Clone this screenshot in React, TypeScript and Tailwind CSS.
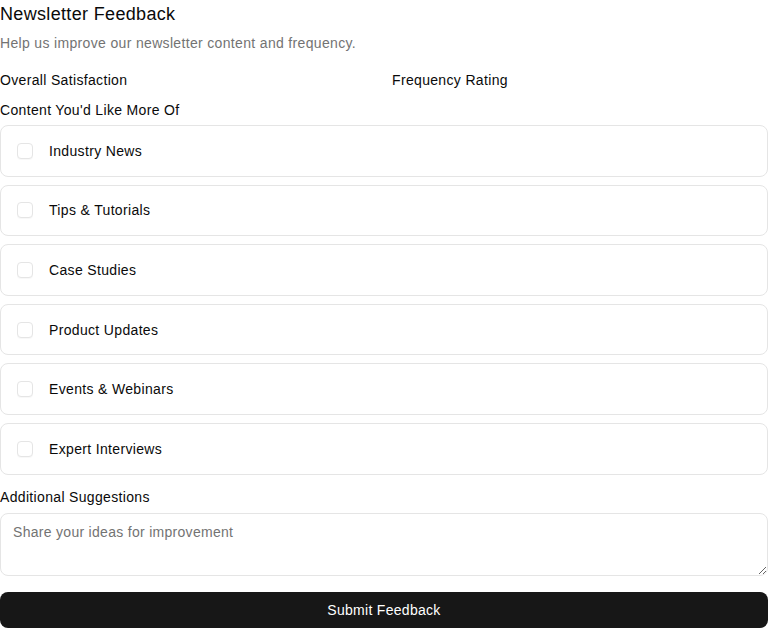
import React from "react";

const items = [
  "Industry News",
  "Tips & Tutorials",
  "Case Studies",
  "Product Updates",
  "Events & Webinars",
  "Expert Interviews",
];

const font = { fontFamily: '"Liberation Sans", Arial, sans-serif', letterSpacing: "0.021em" };

export default function App() {
  return (
    <div className="w-[768px] h-[628px] overflow-hidden bg-white text-[#0a0a0a]" style={font}>
      <h1 className="text-lg leading-7 font-normal">Newsletter Feedback</h1>
      <p className="mt-[5px] text-sm leading-5 text-[#737373]">
        Help us improve our newsletter content and frequency.
      </p>
      <div className="mt-[17px] grid grid-cols-2 gap-4">
        <div className="text-sm leading-5">Overall Satisfaction</div>
        <div className="text-sm leading-5">Frequency Rating</div>
      </div>
      <div className="mt-[10px] text-sm leading-5">Content You'd Like More Of</div>
      <div className="mt-[5px] flex flex-col gap-2">
        {items.map((it) => (
          <label
            key={it}
            className="flex h-[51.6px] items-center gap-4 rounded-lg border border-[#e5e5e5] px-4"
          >
            <span className="h-4 w-4 shrink-0 rounded-[4px] border border-[#e5e5e5] bg-white shadow-[0_1px_1px_rgba(0,0,0,0.03)]" />
            <span className="text-sm leading-5">{it}</span>
          </label>
        ))}
      </div>
      <div className="mt-[12px] text-sm leading-5">Additional Suggestions</div>
      <textarea
        className="mt-[6px] block h-[63px] w-full rounded-lg border border-[#e5e5e5] px-3 py-2 text-sm leading-5 placeholder:text-[#737373] outline-none"
        placeholder="Share your ideas for improvement"
        style={font}
      />
      <button
        className="mt-4 flex h-9 w-full items-center justify-center rounded-lg bg-[#171717] text-sm text-white"
        style={font}
      >
        Submit Feedback
      </button>
    </div>
  );
}
